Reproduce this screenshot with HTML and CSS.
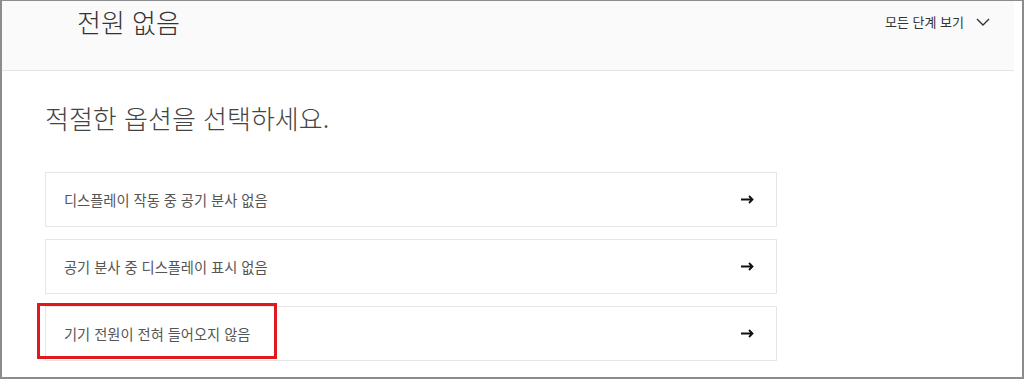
FILE: index.html
```html
<!DOCTYPE html>
<html lang="ko">
<head>
    <meta charset="UTF-8">
    <meta name="viewport" content="width=device-width, initial-scale=1.0">
    <title>전원 없음</title>
    <link rel="stylesheet" href="styles.css">
</head>
<body>
    <div class="frame">
        <header class="step-header">
            <h1>전원 없음</h1>
            <button class="all-steps">
                모든 단계 보기
                <svg width="14" height="8" viewBox="0 0 14 8" fill="none" stroke="currentColor" stroke-width="1.4">
                    <path d="M1 1l6 6 6-6"/>
                </svg>
            </button>
        </header>

        <main class="content">
            <h2>적절한 옵션을 선택하세요.</h2>

            <ul class="option-list">
                <li class="option">
                    <span>디스플레이 작동 중 공기 분사 없음</span>
                    <svg class="arrow" width="13" height="9" viewBox="0 0 13 9" fill="none" stroke="currentColor" stroke-width="1.8">
                        <path d="M0 4.5h11.5M8 1l3.5 3.5L8 8"/>
                    </svg>
                </li>
                <li class="option">
                    <span>공기 분사 중 디스플레이 표시 없음</span>
                    <svg class="arrow" width="13" height="9" viewBox="0 0 13 9" fill="none" stroke="currentColor" stroke-width="1.8">
                        <path d="M0 4.5h11.5M8 1l3.5 3.5L8 8"/>
                    </svg>
                </li>
                <li class="option highlighted">
                    <span>기기 전원이 전혀 들어오지 않음</span>
                    <svg class="arrow" width="13" height="9" viewBox="0 0 13 9" fill="none" stroke="currentColor" stroke-width="1.8">
                        <path d="M0 4.5h11.5M8 1l3.5 3.5L8 8"/>
                    </svg>
                </li>
            </ul>
        </main>
    </div>
</body>
</html>
```

FILE: styles.css
```css
* {
    margin: 0;
    padding: 0;
    box-sizing: border-box;
}

body {
    font-family: 'Noto Sans CJK KR', 'Noto Sans', sans-serif;
    background: #ffffff;
    color: #333333;
}

.frame {
    width: 1024px;
    height: 379px;
    border: 2px solid #8c8c8c;
    border-top-width: 1px;
    overflow: hidden;
}

.step-header {
    display: flex;
    justify-content: space-between;
    align-items: flex-start;
    height: 70px;
    margin-right: 8px;
    padding: 4px 24px 0 75px;
    background: #fafafa;
    border-bottom: 1px solid #e4e4e4;
}

.step-header h1 {
    font-size: 26px;
    font-weight: 300;
    line-height: 34px;
    color: #333333;
}

.all-steps {
    display: flex;
    align-items: center;
    gap: 12px;
    margin-top: 7px;
    background: none;
    border: none;
    font-family: inherit;
    font-size: 13px;
    line-height: 20px;
    color: #333333;
    cursor: pointer;
}

.content {
    padding: 30px 0 0 43px;
}

.content h2 {
    font-size: 26px;
    font-weight: 300;
    line-height: 34px;
    color: #444444;
    margin-bottom: 37px;
}

.option-list {
    list-style: none;
    width: 732px;
    display: flex;
    flex-direction: column;
    gap: 12px;
}

.option {
    position: relative;
    display: flex;
    align-items: center;
    justify-content: space-between;
    height: 55px;
    padding: 0 22px 0 18px;
    border: 1px solid #e6e6e6;
    font-size: 14.25px;
    color: #555555;
    cursor: pointer;
}

.arrow {
    color: #111111;
}

.highlighted::after {
    content: '';
    position: absolute;
    left: -9px;
    top: -4px;
    width: 240px;
    height: 56px;
    box-sizing: border-box;
    border: 3px solid #e0191f;
}
```
